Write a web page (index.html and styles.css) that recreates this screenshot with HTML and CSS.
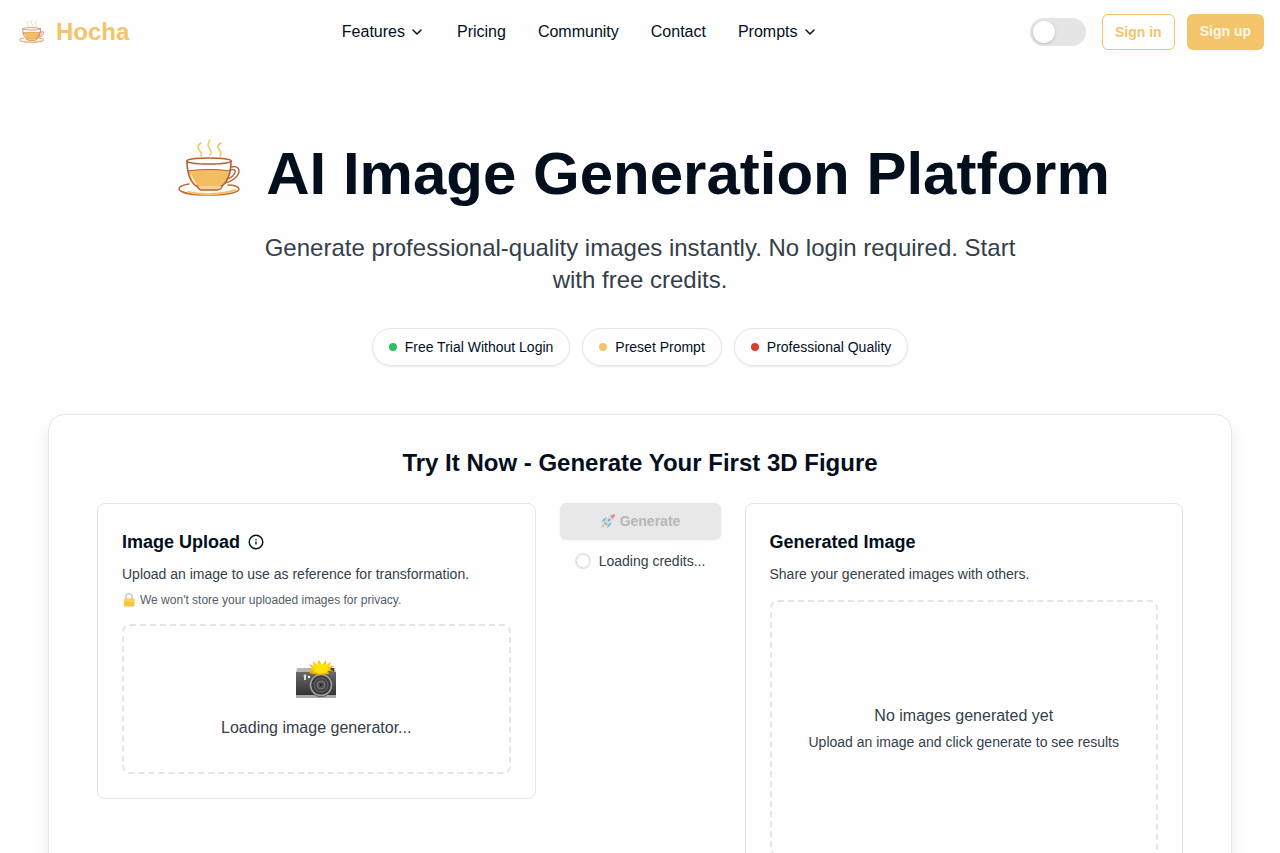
FILE: index.html
```
<!DOCTYPE html>
<html lang="en">
<head>
    <meta charset="UTF-8">
    <meta name="viewport" content="width=device-width, initial-scale=1.0">
    <title>Hocha - AI Image Generation Platform</title>
    <link rel="stylesheet" href="styles.css">
</head>
<body>
    <svg class="symbols" aria-hidden="true">
        <symbol id="teacup" viewBox="0 0 80 80">
            <g fill="none" stroke-linecap="round" stroke-linejoin="round">
                <path d="M31 22c2-4-3-5-3-9 0-2 1-3 3-4M40 21c4-5-3-6-2-11l2-4M50 22c3-4-2-6-2-9 0-2 1-3 3-4" stroke="#f0c66b" stroke-width="1.6"/>
                <path d="M19 50c-7 1-10 3-10 5 1 4 15 6 30 6s30-2 30-6c0-2-4-4-11-4" fill="#fffdf8" stroke="#c1683a" stroke-width="1.5"/>
                <path d="M18 58c12 3 33 3 47-2" stroke="#f3c267" stroke-width="2.2"/>
                <path d="M17 27c0 13 4 23 11 27h22c7-4 11-14 11-27z" fill="#fff"/>
                <path d="M18 37c10-2 32-2 42 0-2 9-5 14-10 17H28c-5-3-8-8-10-17z" fill="#f2be61"/>
                <path d="M17 27c0 13 4 23 11 26h22c7-3 11-13 11-26" stroke="#b95f37" stroke-width="1.6"/>
                <ellipse cx="39" cy="27" rx="22" ry="3" fill="#fff" stroke="#b95f37" stroke-width="1.5"/>
                <path d="M18 37c10-2 32-2 42 0" stroke="#b95f37" stroke-width="1"/>
                <path d="M61 33c5-1 8 0 8 4 0 5-7 11-14 12M60 36c4-1 6 0 5 2 0 3-4 6-8 7" stroke="#b95f37" stroke-width="1.4"/>
                <path d="M27 52c1 2 2 4 4 4h16c3 0 5-2 5-4" fill="#f6d395" stroke="#b95f37" stroke-width="1.4"/>
                <path d="M21 41c1 4 3 7 5 9" stroke="#fff0cc" stroke-width="1.4"/>
            </g>
        </symbol>
        <symbol id="chevron" viewBox="0 0 24 24">
            <path d="m6 9 6 6 6-6" fill="none" stroke="currentColor" stroke-width="2.2" stroke-linecap="round" stroke-linejoin="round"/>
        </symbol>
    </svg>

    <header class="header">
        <a class="brand" href="#">
            <svg class="brand-logo" aria-hidden="true"><use href="#teacup"/></svg>
            Hocha
        </a>
        <nav class="nav">
            <button class="nav-item" type="button">Features <svg class="chevron" aria-hidden="true"><use href="#chevron"/></svg></button>
            <a class="nav-item" href="#">Pricing</a>
            <a class="nav-item" href="#">Community</a>
            <a class="nav-item" href="#">Contact</a>
            <button class="nav-item" type="button">Prompts <svg class="chevron" aria-hidden="true"><use href="#chevron"/></svg></button>
        </nav>
        <div class="actions">
            <input class="theme-switch" type="checkbox" role="switch" aria-label="Toggle theme">
            <button class="btn btn-outline" type="button">Sign in</button>
            <button class="btn btn-primary" type="button">Sign up</button>
        </div>
    </header>

    <main>
        <section class="hero">
            <h1 class="hero-title">
                <svg class="hero-logo" aria-hidden="true"><use href="#teacup"/></svg>
                AI Image Generation Platform
            </h1>
            <p class="hero-text">Generate professional-quality images instantly. No login required. Start with free credits.</p>
            <ul class="chips">
                <li class="chip"><span class="dot dot-green"></span>Free Trial Without Login</li>
                <li class="chip"><span class="dot dot-yellow"></span>Preset Prompt</li>
                <li class="chip"><span class="dot dot-red"></span>Professional Quality</li>
            </ul>
        </section>

        <section class="panel">
            <h2 class="panel-title">Try It Now - Generate Your First 3D Figure</h2>
            <div class="workspace">
                <div class="card">
                    <h3 class="card-title">
                        Image Upload
                        <button class="info" type="button" aria-label="About image upload">
                            <svg viewBox="0 0 16 16" width="16" height="16" fill="none" stroke="currentColor" stroke-width="1.4">
                                <circle cx="8" cy="8" r="6.8"/>
                                <path d="M8 7.4v3.2M8 5v1.2"/>
                            </svg>
                        </button>
                    </h3>
                    <p class="card-text">Upload an image to use as reference for transformation.</p>
                    <p class="card-note">
                        <svg class="lock" viewBox="0 0 14 16" aria-hidden="true">
                            <path d="M3.8 8V5a3.2 3.2 0 0 1 6.4 0v3" fill="none" stroke="#c9ced0" stroke-width="1.6"/>
                            <rect x="2" y="6.5" width="10.5" height="8" rx="1" fill="#fcc23c"/>
                            <path d="M2.5 7h9.5v3H2.5z" fill="#ffcf5e"/>
                        </svg>
                        We won't store your uploaded images for privacy.
                    </p>
                    <div class="dropzone">
                        <svg class="camera" viewBox="0 0 42 42" aria-hidden="true">
                            <defs>
                                <linearGradient id="body-shade" x2="0" y2="1">
                                    <stop stop-color="#6a6a6a"/>
                                    <stop offset="1" stop-color="#303030"/>
                                </linearGradient>
                                <radialGradient id="flash">
                                    <stop stop-color="#fff200"/>
                                    <stop offset=".5" stop-color="#fddb05"/>
                                    <stop offset="1" stop-color="#f2a600"/>
                                </radialGradient>
                            </defs>
                            <path d="M2 10h38l1 5H1z" fill="#b5b5b5"/>
                            <path d="M1 14h40v24H1z" fill="url(#body-shade)"/>
                            <path d="M1 37h40v3H1z" fill="#a8a8a8"/>
                            <path d="M32 10h7v4h-7z" fill="#424242"/>
                            <circle cx="10" cy="18" r="1.4" fill="#e5e5c8"/>
                            <path d="M9 18h2v4H9z" fill="#ddd"/>
                            <circle cx="14" cy="19" r="1.2" fill="#f4f4f4"/>
                            <circle cx="26" cy="27" r="12" fill="#484848"/>
                            <circle cx="26" cy="27" r="10.5" fill="#3c3c3c" stroke="#a2a2a2" stroke-width="1.5"/>
                            <circle cx="26" cy="27" r="7" fill="#444" stroke="#686868"/>
                            <circle cx="26" cy="27" r="4" fill="#555" stroke="#7b7b7b"/>
                            <circle cx="26" cy="27" r="1.5" fill="#282828"/>
                            <path d="m14 15 3-3-4-1 4-1-3-4 5 2-1-5 4 4 2-5 3 5 4-5v5l5-3-2 4 5 0-4 3 4 3-6-1 1 3-9 1-7-1z" fill="url(#flash)"/>
                            <ellipse cx="26" cy="11" rx="7" ry="4.5" fill="#ffe10b"/>
                        </svg>
                        <p>Loading image generator...</p>
                    </div>
                </div>

                <div class="generate">
                    <button class="btn btn-generate" type="button" disabled>
                        <svg class="rocket" viewBox="0 0 16 16" aria-hidden="true">
                            <path d="m7 4-4 2-2 3 4-1zM12 9l-2 4-3 2 1-4z" fill="#4e9fce"/>
                            <path d="m4 9 6-6 3 3-6 6-3-1z" fill="#c0d2dc"/>
                            <path d="M10 3c1-1 3-2 5-2 0 2-1 4-2 5z" fill="#ed4f50"/>
                            <circle cx="9" cy="7" r="1.3" fill="#3d88b5"/>
                            <path d="m4 11 1 1-1 2-3 1 1-3z" fill="#f6b343"/>
                            <path d="m4 9 3 3" stroke="#577b94" stroke-width="1.3"/>
                        </svg>
                        Generate
                    </button>
                    <p class="credits" role="status"><span class="spinner"></span>Loading credits...</p>
                </div>

                <div class="card">
                    <h3 class="card-title">Generated Image</h3>
                    <p class="card-text">Share your generated images with others.</p>
                    <div class="dropzone results">
                        <p>No images generated yet</p>
                        <p class="results-hint">Upload an image and click generate to see results</p>
                    </div>
                </div>
            </div>
        </section>
    </main>
</body>
</html>
```
FILE: styles.css
```
:root{
    --primary : #f4c46b;
    --text : #030f1c;
    --muted : #353f49;
    --border : #e5e5e5;
    --white : #fff;
}

*{
    padding: 0;
    margin: 0;
    box-sizing: border-box;
}

ul{
    list-style: none;
}

a{
    text-decoration: none;
    color: inherit;
}

button{
    font: inherit;
    color: inherit;
    background: none;
    border: none;
    cursor: pointer;
}

svg{
    flex-shrink: 0;
}

body{
    background: #fefefe;
    color: var(--text);
    font-size: 16px;
    line-height: 24px;
    font-family: "Liberation Sans", Arial, sans-serif;
}

.symbols{
    display: none;
}

/* header */
.header{
    display: flex;
    align-items: center;
    justify-content: space-between;
    height: 64px;
    padding: 0 16px;
}

.brand{
    display: flex;
    align-items: center;
    gap: 8px;
    color: var(--primary);
    font-size: 24px;
    font-weight: bold;
}

.brand-logo{
    width: 32px;
    height: 32px;
    margin-top: 4px;
}

.nav{
    display: flex;
    gap: 32px;
}

.nav-item{
    display: flex;
    align-items: center;
    gap: 4px;
}

.chevron{
    width: 16px;
    height: 16px;
}

.actions{
    display: flex;
    align-items: center;
    gap: 12px;
}

.theme-switch{
    appearance: none;
    display: flex;
    align-items: center;
    width: 56px;
    height: 28px;
    margin-right: 4px;
    padding: 0 3px;
    border-radius: 14px;
    background: var(--border);
    cursor: pointer;
}

.theme-switch::before{
    content: '';
    width: 22px;
    height: 22px;
    border-radius: 50%;
    background: var(--white);
    box-shadow: 0 1px 3px rgba(0, 0, 0, 0.2);
}

.theme-switch:checked{
    justify-content: flex-end;
    background: var(--primary);
}

.btn{
    height: 36px;
    padding: 0 12px;
    border: 1px solid transparent;
    border-radius: 6px;
    font-size: 14px;
    line-height: 20px;
    font-weight: bold;
}

.btn-outline{
    border-color: var(--primary);
    color: var(--primary);
}

.btn-primary{
    background: var(--primary);
    color: #fef8e8;
    padding-bottom: 2px;
}

/* hero */
.hero{
    display: flex;
    flex-direction: column;
    align-items: center;
    padding: 68px 16px 48px;
}

.hero-title{
    display: flex;
    align-items: center;
    gap: 16px;
    margin-bottom: 16px;
    font-size: 60px;
    line-height: 84px;
}

.hero-logo{
    width: 80px;
    height: 80px;
}

.hero-text{
    max-width: 768px;
    margin-bottom: 32px;
    color: var(--muted);
    font-size: 24px;
    line-height: 32px;
    text-align: center;
}

.chips{
    display: flex;
    flex-wrap: wrap;
    justify-content: center;
    gap: 12px;
}

.chip{
    display: flex;
    align-items: center;
    gap: 8px;
    padding: 8px 16px;
    border: 1px solid var(--border);
    border-radius: 20px;
    box-shadow: 0 1px 2px rgba(0, 0, 0, 0.08);
    font-size: 14px;
    line-height: 20px;
}

.dot{
    width: 8px;
    height: 8px;
    border-radius: 50%;
}

.dot-green{
    background: #2bc160;
}

.dot-yellow{
    background: var(--primary);
}

.dot-red{
    background: #dc4130;
}

/* try it panel */
.panel{
    margin: 0 48px 48px;
    padding: 32px 48px;
    border: 1px solid var(--border);
    border-radius: 16px;
    box-shadow: 0 10px 15px rgba(0, 0, 0, 0.08);
}

.panel-title{
    margin-bottom: 24px;
    font-size: 24px;
    line-height: 32px;
    text-align: center;
}

.workspace{
    display: grid;
    grid-template-columns: 1fr 161px 1fr;
    align-items: start;
    gap: 24px;
}

.card{
    padding: 24px;
    border: 1px solid var(--border);
    border-radius: 8px;
}

.card-title{
    display: flex;
    align-items: center;
    gap: 8px;
    margin-bottom: 8px;
    font-size: 18px;
    line-height: 28px;
}

.info{
    display: flex;
}

.card-text{
    color: var(--muted);
    font-size: 14px;
    line-height: 20px;
}

.card-note{
    display: flex;
    align-items: center;
    gap: 4px;
    margin-top: 8px;
    color: #555d65;
    font-size: 12px;
    line-height: 16px;
}

.lock{
    width: 14px;
    height: 16px;
}

.dropzone{
    display: flex;
    flex-direction: column;
    align-items: center;
    margin-top: 16px;
    padding: 32px;
    border: 2px dashed var(--border);
    border-radius: 8px;
    color: var(--muted);
    text-align: center;
}

.camera{
    width: 42px;
    height: 42px;
    margin-bottom: 16px;
}

.results{
    justify-content: center;
    min-height: 256px;
}

.results-hint{
    margin-top: 4px;
    font-size: 14px;
    line-height: 20px;
}

.generate{
    display: flex;
    flex-direction: column;
    gap: 12px;
}

.btn-generate{
    display: flex;
    align-items: center;
    justify-content: center;
    gap: 4px;
    background: #e8e8e8;
    box-shadow: 0 1px 2px rgba(0, 0, 0, 0.1);
    color: #b7b7b7;
    cursor: default;
}

.rocket{
    width: 16px;
    height: 16px;
    opacity: 0.6;
}

.credits{
    display: flex;
    align-items: center;
    justify-content: center;
    gap: 8px;
    color: var(--muted);
    font-size: 14px;
    line-height: 20px;
}

.spinner{
    width: 16px;
    height: 16px;
    border: 2px solid var(--border);
    border-radius: 50%;
}

@media screen and (max-width:900px){
    .nav{
        display: none;
    }

    .hero-title{
        font-size: 36px;
        line-height: 40px;
    }

    .panel{
        margin: 0 16px 32px;
        padding: 24px 16px;
    }

    .workspace{
        grid-template-columns: 1fr;
    }
}
```
